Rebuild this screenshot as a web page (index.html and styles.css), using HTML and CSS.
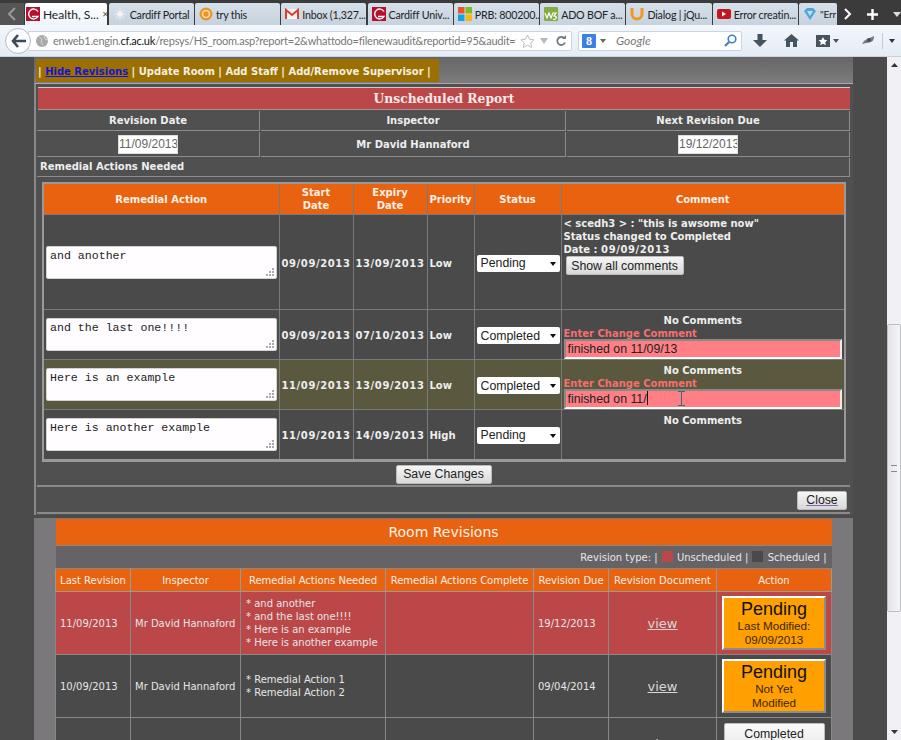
FILE: index.html
```html
<!DOCTYPE html>
<html lang="en">
<head>
  <meta charset="UTF-8" />
  <title>Health, Safety - Room</title>
  <link rel="stylesheet" href="styles.css">
</head>
<body>
  <!-- browser tabs -->
  <div class="tabbar">
    <div class="tab-scroll"><svg width="10" height="14" viewBox="0 0 10 14"><path d="M8 1 2 7l6 6" fill="none" stroke="#9a9a9a" stroke-width="2"/></svg></div>
    <div class="tab tab-active">
      <svg class="favicon" viewBox="0 0 14 14"><rect width="14" height="14" fill="#b5112f"/><path d="M12 4.5A5 5 0 1 0 12 9.5H6" fill="none" stroke="#fff" stroke-width="1.4"/></svg>
      <span class="tab-label">Health, S...</span>
      <span class="tab-close">&#10005;</span>
    </div>
    <div class="tab">
      <svg class="favicon" viewBox="0 0 14 14"><path d="M7 1v12M1 7h12M3 3l8 8M11 3l-8 8" stroke="#e4e6ea" stroke-width="1.5"/><circle cx="7" cy="7" r="2.5" fill="#f4f4f4"/></svg>
      <span class="tab-label">Cardiff Portal</span>
    </div>
    <div class="tab">
      <svg class="favicon" viewBox="0 0 14 14"><circle cx="7" cy="7" r="6.5" fill="#ee9322"/><circle cx="7" cy="7" r="3.5" fill="none" stroke="#fbe3b0" stroke-width="1.5"/></svg>
      <span class="tab-label">try this</span>
    </div>
    <div class="tab">
      <svg class="favicon" viewBox="0 0 14 14"><rect y="2" width="14" height="10" fill="#f4f4f4"/><path d="M1 12V3l6 5 6-5v9" fill="none" stroke="#d8402f" stroke-width="2"/></svg>
      <span class="tab-label">Inbox (1,327...</span>
    </div>
    <div class="tab">
      <svg class="favicon" viewBox="0 0 14 14"><rect width="14" height="14" fill="#b5112f"/><path d="M12 4.5A5 5 0 1 0 12 9.5H6" fill="none" stroke="#fff" stroke-width="1.4"/></svg>
      <span class="tab-label">Cardiff Univ...</span>
    </div>
    <div class="tab">
      <svg class="favicon" viewBox="0 0 14 14"><rect width="6.5" height="6.5" fill="#e8552b"/><rect x="7.5" width="6.5" height="6.5" fill="#7fba2a"/><rect y="7.5" width="6.5" height="6.5" fill="#10a3e8"/><rect x="7.5" y="7.5" width="6.5" height="6.5" fill="#fbb710"/></svg>
      <span class="tab-label">PRB: 800200...</span>
    </div>
    <div class="tab">
      <svg class="favicon" viewBox="0 0 14 14"><rect width="14" height="14" rx="1" fill="#86ad45"/><path d="M1 6l2 5 2-5 2 5 2-5h3l-2 3q3 0 2 2.500-1 1.500-3 .5" fill="none" stroke="#fff" stroke-width="1.2"/></svg>
      <span class="tab-label">ADO BOF a...</span>
    </div>
    <div class="tab">
      <svg class="favicon" viewBox="0 0 14 14"><path d="M2 1v6a5 5 0 0 0 10 0V1" fill="none" stroke="#f2971f" stroke-width="3"/></svg>
      <span class="tab-label">Dialog | jQu...</span>
    </div>
    <div class="tab">
      <svg class="favicon" viewBox="0 0 14 14"><rect y="2" width="14" height="10" rx="2" fill="#c4171d"/><path d="M5 4.500v5l4-2.500z" fill="#fff"/></svg>
      <span class="tab-label">Error creatin...</span>
    </div>
    <div class="tab tab-last">
      <svg class="favicon" viewBox="0 0 14 14"><path d="M1 4l3-3h6l3 3-6 9z" fill="#4ea6dc"/><path d="M4 4h6l-3 5z" fill="#bfe2f6"/></svg>
      <span class="tab-label">"Err</span>
    </div>
    <div class="tab-controls">
      <svg width="8" height="12" viewBox="0 0 8 12"><path d="M1 1l5 5-5 5" fill="none" stroke="#fff" stroke-width="2"/></svg>
      <svg width="11" height="11" viewBox="0 0 11 11"><path d="M5.500 0v11M0 5.500h11" stroke="#fff" stroke-width="2.400"/></svg>
      <svg width="8" height="5" viewBox="0 0 8 5"><path d="M0 0h8L4 5z" fill="#dcdcdc"/></svg>
    </div>
  </div>

  <!-- browser toolbar -->
  <div class="toolbar">
    <div class="back-btn"><svg width="15" height="14" viewBox="0 0 15 14"><path d="M7 1 2 7l5 6M2 7h13" fill="none" stroke="#3d4a57" stroke-width="2.600"/></svg></div>
    <div class="urlbar">
      <svg class="globe" width="12" height="12" viewBox="0 0 12 12"><circle cx="6" cy="6" r="6" fill="#a9a9a9"/><path d="M3 2l3 2-1 3 2 3M8 1l1 3 3 1" fill="none" stroke="#d6d6d6"/></svg>
      <span class="url-text">enweb1.engin.<b>cf.ac.uk</b>/repsys/HS_room.asp?report=2&amp;whattodo=filenewaudit&amp;reportid=95&amp;audit=y</span>
      <svg width="15" height="14" viewBox="0 0 15 14"><path d="M7.500 1l2 4.200 4.600.6-3.400 3.200.9 4.500-4.100-2.300-4.100 2.300.9-4.500L.9 5.800l4.600-.6z" fill="#fff" stroke="#b9bec4"/></svg>
      <svg class="url-drop" width="8" height="6" viewBox="0 0 8 6"><path d="M0 0h8L4 6z" fill="#b4b9be"/></svg>
      <svg class="url-reload" width="12" height="12" viewBox="0 0 12 12"><path d="M10 7.500A4 4 0 1 1 9 3" fill="none" stroke="#6f7b86" stroke-width="1.800"/><path d="M7 4h4V0z" fill="#6f7b86"/></svg>
    </div>
    <div class="searchbar">
      <span class="search-logo">8</span>
      <svg width="6" height="4" viewBox="0 0 6 4"><path d="M0 0h6L3 4z" fill="#666"/></svg>
      <span class="search-text">Google</span>
      <svg width="13" height="13" viewBox="0 0 13 13"><circle cx="8" cy="5" r="3.800" fill="none" stroke="#3f7fc0" stroke-width="1.600"/><path d="M5 8l-4 4" stroke="#3f7fc0" stroke-width="2.200"/></svg>
    </div>
    <div class="tool-icons">
      <svg width="14" height="14" viewBox="0 0 14 14"><path d="M4.500 0h5v6H14l-7 7-7-7h4.500z" fill="#47535f"/></svg>
      <svg width="15" height="13" viewBox="0 0 15 13"><path d="M7.500 0 15 6.500h-2V13H9V8H6v5H2V6.500H0z" fill="#47535f"/></svg>
      <span class="bookmark-tool">
        <svg width="14" height="12" viewBox="0 0 14 12"><rect width="14" height="12" fill="#47535f"/><path d="M7 2l1.400 2.800 3 .4-2.200 2 .6 3L7 8.700l-2.800 1.500.6-3-2.200-2 3-.4z" fill="#fff"/></svg>
        <svg width="6" height="4" viewBox="0 0 6 4"><path d="M0 0h6L3 4z" fill="#47535f"/></svg>
      </span>
      <svg class="blob" width="14" height="11" viewBox="0 0 14 11"><path d="M1 9q2-4 5-5t7-3q0 5-3 6T5 8z" fill="#77797b"/><circle cx="8" cy="5" r="2" fill="#4c4e50"/></svg>
      <span class="tool-divider"></span>
      <svg width="6" height="4" viewBox="0 0 6 4"><path d="M0 0h6L3 4z" fill="#333"/></svg>
    </div>
  </div>

  <div class="viewport">
    <div class="content">
      <div class="top-strip">
        <div class="room-nav">| <a href="#" class="nav-link">Hide Revisions</a> | Update Room | Add Staff | Add/Remove Supervisor |</div>
      </div>

      <div class="report-panel">
        <h2 class="report-title">Unscheduled Report</h2>

        <div class="info-grid">
          <div class="info-cell info-head">Revision Date</div>
          <div class="info-cell info-head">Inspector</div>
          <div class="info-cell info-head">Next Revision Due</div>
          <div class="info-cell info-value"><input class="date-input" type="text" value="11/09/2013"></div>
          <div class="info-cell info-value">Mr David Hannaford</div>
          <div class="info-cell info-value"><input class="date-input" type="text" value="19/12/2013"></div>
        </div>
        <div class="section-label">Remedial Actions Needed</div>

        <div class="actions-wrap">
          <table class="actions-table">
            <colgroup>
              <col class="col-action"><col class="col-date"><col class="col-date"><col class="col-priority"><col class="col-status"><col>
            </colgroup>
            <thead>
              <tr>
                <th>Remedial Action</th>
                <th>Start<br>Date</th>
                <th>Expiry<br>Date</th>
                <th>Priority</th>
                <th>Status</th>
                <th>Comment</th>
              </tr>
            </thead>
            <tbody>
              <tr class="row-tall">
                <td><textarea class="action-text">and another</textarea></td>
                <td class="date-cell">09/09/2013</td>
                <td class="date-cell">13/09/2013</td>
                <td>Low</td>
                <td><span class="status-select"><select><option>Pending</option></select></span></td>
                <td class="comment-cell">
                  &lt; scedh3 &gt; : "this is awsome now"<br>
                  Status changed to Completed<br>
                  Date : <span class="date-cell">09/09/2013</span><br>
                  <button class="btn btn-comments">Show all comments</button>
                </td>
              </tr>
              <tr class="row-short">
                <td><textarea class="action-text">and the last one!!!!</textarea></td>
                <td class="date-cell">09/09/2013</td>
                <td class="date-cell">07/10/2013</td>
                <td>Low</td>
                <td><span class="status-select"><select><option>Completed</option></select></span></td>
                <td class="comment-cell">
                  <div class="no-comments">No Comments</div>
                  <div class="change-label">Enter Change Comment</div>
                  <div class="comment-input">finished on 11/09/13</div>
                </td>
              </tr>
              <tr class="row-short row-changed">
                <td><textarea class="action-text">Here is an example</textarea></td>
                <td class="date-cell">11/09/2013</td>
                <td class="date-cell">13/09/2013</td>
                <td>Low</td>
                <td><span class="status-select"><select><option>Completed</option></select></span></td>
                <td class="comment-cell">
                  <div class="no-comments">No Comments</div>
                  <div class="change-label">Enter Change Comment</div>
                  <div class="comment-input">finished on 11/<span class="caret"></span>
                    <svg class="ibeam" width="7" height="15" viewBox="0 0 7 15"><path d="M0 .5h7M0 14.500h7M3.500 .5v14" fill="none" stroke="#2f6f78"/></svg>
                  </div>
                </td>
              </tr>
              <tr class="row-short">
                <td><textarea class="action-text">Here is another example</textarea></td>
                <td class="date-cell">11/09/2013</td>
                <td class="date-cell">14/09/2013</td>
                <td>High</td>
                <td><span class="status-select"><select><option>Pending</option></select></span></td>
                <td class="comment-cell"><div class="no-comments">No Comments</div></td>
              </tr>
            </tbody>
          </table>
        </div>

        <div class="save-row"><button class="btn">Save Changes</button></div>
        <div class="close-row"><button class="btn btn-close">Close</button></div>
      </div>

      <div class="revisions-panel">
        <table class="revisions-table">
          <colgroup>
            <col class="rc-last"><col class="rc-inspector"><col class="rc-needed"><col class="rc-complete"><col class="rc-due"><col class="rc-doc"><col>
          </colgroup>
          <thead>
            <tr><th colspan="7" class="rev-title">Room Revisions</th></tr>
            <tr>
              <td colspan="7" class="rev-legend">
                Revision type: | <span class="swatch swatch-red"></span> Unscheduled | <span class="swatch swatch-dark"></span> Scheduled |
              </td>
            </tr>
            <tr class="rev-head">
              <th>Last Revision</th>
              <th>Inspector</th>
              <th>Remedial Actions Needed</th>
              <th>Remedial Actions Complete</th>
              <th>Revision Due</th>
              <th>Revision Document</th>
              <th>Action</th>
            </tr>
          </thead>
          <tbody>
            <tr class="rev-row rev-unscheduled">
              <td>11/09/2013</td>
              <td>Mr David Hannaford</td>
              <td class="rev-list">* and another<br>* and the last one!!!!<br>* Here is an example<br>* Here is another example</td>
              <td></td>
              <td>19/12/2013</td>
              <td class="rev-doc"><a href="#">view</a></td>
              <td class="rev-action"><div class="action-badge"><strong>Pending</strong>Last Modified: 09/09/2013</div></td>
            </tr>
            <tr class="rev-row">
              <td>10/09/2013</td>
              <td>Mr David Hannaford</td>
              <td class="rev-list">* Remedial Action 1<br>* Remedial Action 2</td>
              <td></td>
              <td>09/04/2014</td>
              <td class="rev-doc"><a href="#">view</a></td>
              <td class="rev-action"><div class="action-badge"><strong>Pending</strong>Not Yet<br>Modified</div></td>
            </tr>
            <tr class="rev-row rev-partial">
              <td>09/09/2013</td>
              <td>Mr David Hannaford</td>
              <td></td>
              <td></td>
              <td>09/03/2014</td>
              <td class="rev-doc"><a href="#">view</a></td>
              <td class="rev-action"><button class="btn btn-completed">Completed</button></td>
            </tr>
          </tbody>
        </table>
      </div>
    </div>

    <div class="scrollbar">
      <svg class="scroll-arrow" width="7" height="4" viewBox="0 0 7 4"><path d="M3.500 0 7 4H0z" fill="#333"/></svg>
      <div class="scroll-thumb"><span class="scroll-grip"></span></div>
      <svg class="scroll-arrow scroll-arrow-down" width="7" height="4" viewBox="0 0 7 4"><path d="M0 0h7L3.500 4z" fill="#333"/></svg>
    </div>
  </div>
</body>
</html>
```

FILE: styles.css
```css
html, body {
  margin: 0;
  padding: 0;
  height: 740px;
  overflow: hidden;
}
body {
  font-family: "DejaVu Sans", sans-serif;
  font-size: 10px;
  background-color: #4b4b4b;
}

/* browser tabs */
.tabbar {
  display: flex;
  align-items: flex-end;
  gap: 1.2px;
  height: 25px;
  background-color: #3b3b3b;
  font-family: Lato, sans-serif;
  font-size: 10.700px;
}
.tab-scroll {
  display: flex;
  align-items: center;
  justify-content: center;
  width: 23.800px;
  height: 22px;
  background-color: #555;
}
.tab {
  display: flex;
  align-items: center;
  gap: 3px;
  box-sizing: border-box;
  width: 85.500px;
  height: 22px;
  padding-left: 4px;
  background: linear-gradient(#d6e0ea, #c6d2de);
  border-radius: 2px 2px 0 0;
  color: #222;
  letter-spacing: -0.2px;
  white-space: nowrap;
  overflow: hidden;
}
.tab-active {
  width: 83px;
  padding-left: 1px;
  background: linear-gradient(#fff, #eef4fb);
  font-size: 12px;
  letter-spacing: 0;
}
.tab-last {
  width: 38px;
  font-size: 10px;
}
.favicon {
  flex: none;
  width: 14px;
  height: 14px;
}
.tab-close {
  margin-left: auto;
  margin-right: 4px;
  font-size: 8px;
  color: #555;
}
.tab-controls {
  display: flex;
  align-items: center;
  gap: 15px;
  height: 22px;
  padding-left: 6px;
}

/* browser toolbar */
.toolbar {
  display: flex;
  align-items: center;
  box-sizing: border-box;
  height: 32px;
  padding: 0 6px 0 5px;
  background: linear-gradient(#f2f7fc, #e4ecf5);
  border-bottom: 1px solid #c8d0d8;
  font-family: Lato, sans-serif;
}
.back-btn {
  z-index: 1;
  display: flex;
  align-items: center;
  justify-content: center;
  flex: none;
  width: 24px;
  height: 24px;
  background-color: #fafcff;
  border: 1px solid #b4bec8;
  border-radius: 50%;
}
.urlbar {
  display: flex;
  align-items: center;
  gap: 4px;
  box-sizing: border-box;
  width: 544px;
  height: 20px;
  margin-left: -3px;
  padding: 0 4px 0 7px;
  background-color: #fff;
  border: 1px solid #ccd5df;
  border-radius: 0 2px 2px 0;
}
.globe {
  flex: none;
}
.url-text {
  flex: 1;
  min-width: 0;
  margin-left: 1px;
  margin-right: 0;
  font-size: 11px;
  letter-spacing: -0.23px;
  color: #777;
  white-space: nowrap;
  overflow: hidden;
}
.url-text b {
  font-weight: normal;
  color: #111;
}
.url-drop {
  margin-left: 1px;
}
.url-reload {
  margin-left: 3px;
}
.searchbar {
  display: flex;
  align-items: center;
  gap: 4px;
  box-sizing: border-box;
  width: 169px;
  height: 20px;
  margin-left: 6px;
  padding: 0 4px 0 3px;
  background-color: #fff;
  border: 1px solid #ccd5df;
  border-radius: 2px;
}
.search-logo {
  width: 14px;
  height: 14px;
  background-color: #3c7fe6;
  border-radius: 1px;
  color: #fff;
  font: bold 12px/14px "Liberation Serif", serif;
  text-align: center;
}
.search-text {
  flex: 1;
  margin-left: 6px;
  font-size: 12px;
  font-style: italic;
  color: #777;
}
.tool-icons {
  display: flex;
  align-items: center;
  gap: 17px;
  margin-left: 11px;
}
.bookmark-tool {
  display: flex;
  align-items: center;
  gap: 3px;
}
.blob {
  margin-left: 5px;
}
.tool-divider {
  width: 1px;
  height: 16px;
  margin: 0 -11px 0 -10px;
  background-color: #c2cad2;
}

/* page */
.viewport {
  display: flex;
  height: 683px;
}
.content {
  flex: 1;
  min-width: 0;
  padding: 0 34px;
  overflow: hidden;
}
.top-strip {
  box-sizing: border-box;
  height: 26px;
  padding: 2px 0 0 2px;
  background: linear-gradient(#666, #7d7b7d);
}
.room-nav {
  box-sizing: border-box;
  width: 403px;
  height: 23px;
  padding-left: 2px;
  background-color: #9b7000;
  color: #f4f0e0;
  font-weight: bold;
  line-height: 25px;
  white-space: nowrap;
}
.nav-link {
  color: #1414d8;
}

/* report panel */
.report-panel {
  box-sizing: border-box;
  height: 432px;
  padding: 3px 3px 0 1px;
  background-color: #505050;
  border-top: 1px solid #aaa;
  border-left: 2px solid #8a8a8a;
  color: #eee;
  font-weight: bold;
}
.report-title {
  box-sizing: border-box;
  height: 23px;
  margin: 0 0 0 1px;
  background-color: #bc4749;
  border-top: 1px solid #ccc;
  border-bottom: 1px solid #999;
  color: #f6eaea;
  font-family: "DejaVu Serif", serif;
  font-size: 12.300px;
  line-height: 21px;
  text-align: center;
}
.info-grid {
  display: grid;
  grid-template-columns: 223px 305px 283px;
  grid-template-rows: 20px 25px;
  column-gap: 1px;
  row-gap: 1px;
  margin-top: 1px;
}
.info-cell {
  display: flex;
  align-items: center;
  justify-content: center;
  border-right: 1px solid #8c8c8c;
  border-bottom: 1px solid #8c8c8c;
}
.date-input {
  box-sizing: border-box;
  width: 60px;
  height: 19px;
  padding: 0;
  border: 1px solid #ddd;
  background-color: #fff;
  color: #666;
  font-family: "Liberation Sans", sans-serif;
  font-size: 12px;
  text-align: center;
}
.section-label {
  box-sizing: border-box;
  height: 19px;
  padding-left: 3px;
  margin-top: 1px;
  border-right: 1px solid #8c8c8c;
  border-bottom: 1px solid #8c8c8c;
  line-height: 18px;
}
.actions-wrap {
  margin: 5px 0 0 5px;
  width: 804px;
  border: 2px solid #999;
  border-bottom-width: 3px;
  box-sizing: border-box;
  background-color: #4a4a4a;
}
.actions-table {
  width: 100%;
  table-layout: fixed;
  border-collapse: collapse;
}
.col-action { width: 235px; }
.col-date { width: 74px; }
.col-priority { width: 47px; }
.col-status { width: 87px; }
.actions-table th {
  height: 30px;
  padding: 0;
  background-color: #e8620f;
  color: #fbeee4;
  line-height: 13px;
  border: 1px solid #7a7a7a;
  border-top: 0;
}
.actions-table td {
  box-sizing: border-box;
  padding: 0 0 0 2px;
  border: 1px solid #7a7a7a;
  background-color: #4a4a4a;
  white-space: nowrap;
}
.actions-table td:nth-child(n+2):nth-child(-n+5) {
  padding-top: 2px;
}
.actions-table th:first-child, .actions-table td:first-child {
  border-left: 0;
}
.actions-table th:last-child, .actions-table td:last-child {
  border-right: 0;
}
.actions-table tr:last-child td {
  border-bottom: 0;
}
.row-tall td { height: 95px; }
.row-short td { height: 49px; }
.actions-table .row-changed td {
  background-color: #5a583f;
}
.date-cell {
  letter-spacing: 0.6px;
}
.action-text {
  display: block;
  box-sizing: border-box;
  width: 231px;
  height: 33px;
  margin: 0;
  padding: 2px 3px;
  border: 1px solid #d2d2d2;
  border-radius: 2px;
  background-color: #fffdff;
  color: #222;
  font-family: "Liberation Mono", monospace;
  font-size: 11.600px;
  line-height: 13px;
}
.action-text::-webkit-resizer {
  background-image:
    radial-gradient(circle, #aaa 1px, transparent 1px),
    radial-gradient(circle, #aaa 1px, transparent 1px),
    radial-gradient(circle, #aaa 1px, transparent 1px),
    radial-gradient(circle, #aaa 1px, transparent 1px),
    radial-gradient(circle, #aaa 1px, transparent 1px),
    radial-gradient(circle, #aaa 1px, transparent 1px);
  background-size: 2px 2px;
  background-repeat: no-repeat;
  background-position:
    right 2px bottom 2px,
    right 5px bottom 2px,
    right 8px bottom 2px,
    right 2px bottom 5px,
    right 5px bottom 5px,
    right 2px bottom 8px;
}
.status-select {
  position: relative;
  display: block;
  width: 83px;
  height: 17px;
}
.status-select select {
  appearance: none;
  display: block;
  box-sizing: border-box;
  width: 83px;
  height: 17px;
  padding: 0 0 0 4px;
  border: 0;
  border-radius: 2px;
  background-color: #fff;
  color: #222;
  font-family: "Liberation Sans", sans-serif;
  font-size: 12.300px;
}
.status-select::after {
  content: "";
  position: absolute;
  top: 7px;
  right: 4px;
  border-style: solid;
  border-width: 4px 3px 0;
  border-color: #111 transparent transparent;
}
.actions-table .comment-cell {
  padding: 4px 2px 0 2px;
  vertical-align: top;
  line-height: 13px;
}
.actions-table .row-tall .comment-cell {
  padding-top: 2px;
}
.no-comments {
  text-align: center;
}
.change-label {
  color: #f56f6f;
}
.comment-input {
  position: relative;
  box-sizing: border-box;
  width: 278px;
  height: 20px;
  margin-top: -1px;
  padding-left: 2px;
  background-color: #ff7f84;
  border: 2px solid #8a8a8a;
  border-right-color: #eee;
  border-bottom-color: #fff;
  color: #222;
  font-family: "Liberation Sans", sans-serif;
  font-size: 12.300px;
  font-weight: normal;
  line-height: 16px;
}
.caret {
  display: inline-block;
  width: 1px;
  height: 14px;
  background-color: #111;
  vertical-align: -2px;
}
.ibeam {
  position: absolute;
  top: 0;
  left: 112px;
}
.btn {
  box-sizing: border-box;
  height: 19px;
  padding: 0;
  border: 1px solid #bbb;
  border-radius: 2px;
  background: linear-gradient(#f6f6f6, #d8d8d8);
  color: #222;
  font-family: "Liberation Sans", sans-serif;
  font-size: 12.300px;
}
.btn-comments {
  display: block;
  width: 118px;
  margin: 0 0 0 2px;
}
.save-row {
  box-sizing: border-box;
  height: 25px;
  padding-top: 3px;
  border-bottom: 2px solid #8a8a8a;
  text-align: center;
}
.save-row .btn {
  width: 96px;
}
.close-row {
  box-sizing: border-box;
  height: 27px;
  padding: 4px 3px 0 0;
  border-bottom: 2px solid #8a8a8a;
  text-align: right;
}
.btn-close {
  width: 50px;
  text-decoration: underline;
  text-decoration-color: #8060b0;
}

/* room revisions */
.revisions-panel {
  padding: 1px 21px 0;
  margin-top: 3px;
  background-color: #7a787a;
  height: 222px;
}
.revisions-table {
  width: 100%;
  table-layout: fixed;
  border-collapse: collapse;
  color: #e6e6e6;
}
.rc-last { width: 75px; }
.rc-inspector { width: 110px; }
.rc-needed { width: 145px; }
.rc-complete { width: 148px; }
.rc-due { width: 75px; }
.rc-doc { width: 108px; }
.rev-title {
  height: 26px;
  padding: 0;
  background-color: #e8620f;
  color: #fdf2ea;
  font-size: 14px;
  font-weight: normal;
}
.rev-legend {
  height: 22px;
  padding: 0 5px 0 0;
  background-color: #656365;
  border-top: 1px solid #888;
  border-bottom: 1px solid #888;
  text-align: right;
}
.swatch {
  display: inline-block;
  width: 11px;
  height: 11px;
  margin: 0 1px;
  vertical-align: -1px;
}
.swatch-red { background-color: #bc4749; }
.swatch-dark { background-color: #4a4a4a; }
.rev-head th {
  height: 22px;
  padding: 0;
  background-color: #e8620f;
  border: 1px solid #999;
  border-top: 0;
  color: #fbeee4;
  font-weight: normal;
  white-space: nowrap;
}
.rev-row td {
  height: 62px;
  padding: 0 0 0 4px;
  background-color: #4a4a4a;
  border: 1px solid #888;
  white-space: nowrap;
}
.rev-unscheduled td {
  background-color: #bc4749;
}
.rev-row .rev-list {
  line-height: 13px;
  padding-left: 5px;
}
.rev-row .rev-doc {
  padding: 0;
  text-align: center;
  font-size: 13px;
}
.rev-doc a {
  color: #d8d8d8;
}
.rev-row .rev-action {
  padding: 0 5px;
}
.action-badge {
  box-sizing: border-box;
  height: 54px;
  background-color: #ffa000;
  border: 2px solid;
  border-color: #fff #8c8c8c #8c8c8c #fff;
  color: #3a2600;
  font-family: "Liberation Sans", sans-serif;
  font-size: 11.700px;
  line-height: 14px;
  text-align: center;
  white-space: normal;
}
.action-badge strong {
  display: block;
  margin-bottom: -2px;
  color: #111;
  font-size: 18px;
  font-weight: normal;
  line-height: 23px;
}
.rev-partial td {
  height: 48px;
}
.rev-row .rev-action:has(.btn-completed) {
  padding-top: 5px;
  vertical-align: top;
}
.btn-completed {
  display: block;
  width: 101px;
  height: 22px;
  margin: 0 auto;
  background: linear-gradient(#fafafa, #ececec);
}

/* page scrollbar */
.scrollbar {
  display: flex;
  flex-direction: column;
  align-items: center;
  width: 14px;
  background-color: #f1f0f4;
}
.scroll-arrow {
  flex: none;
  margin-top: 6px;
}
.scroll-thumb {
  display: flex;
  align-items: center;
  justify-content: center;
  flex: none;
  box-sizing: border-box;
  width: 14px;
  height: 288px;
  margin-top: 257px;
  background: linear-gradient(90deg, #e4e4ea, #f4f4f8);
  border: 1px solid #bdbdc4;
  border-radius: 2px;
}
.scroll-grip {
  width: 6px;
  height: 5px;
  border-top: 1px solid #888;
  border-bottom: 1px solid #888;
}
.scroll-arrow-down {
  margin-top: auto;
  margin-bottom: 6px;
}
```
